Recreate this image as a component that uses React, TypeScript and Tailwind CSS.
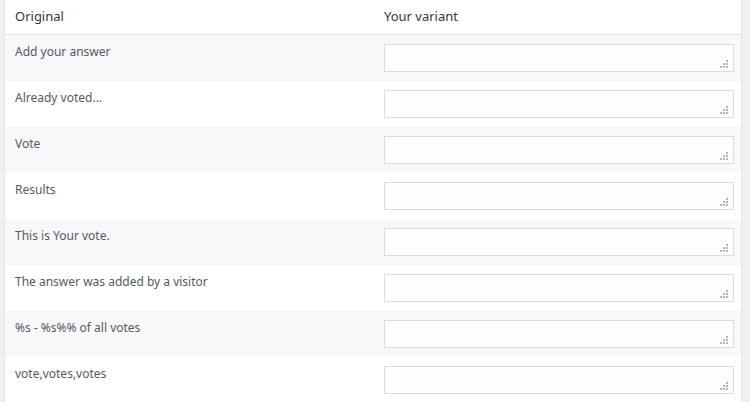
const rows = [
  "Add your answer",
  "Already voted...",
  "Vote",
  "Results",
  "This is Your vote.",
  "The answer was added by a visitor",
  "%s - %s%% of all votes",
  "vote,votes,votes",
];

function ResizeGrip() {
  return (
    <svg
      className="pointer-events-none absolute right-[5px] bottom-[3px]"
      width="9"
      height="9"
      viewBox="0 0 9 9"
      fill="#b4b4b8"
    >
      <rect x="6" y="0" width="2" height="2" />
      <rect x="3" y="3" width="2" height="2" />
      <rect x="6" y="3" width="2" height="2" />
      <rect x="0" y="6" width="2" height="2" />
      <rect x="3" y="6" width="2" height="2" />
      <rect x="6" y="6" width="2" height="2" />
    </svg>
  );
}

export default function App() {
  return (
    <div
      className="min-h-[402px] w-[750px] bg-[#f0f0f1] pl-[4px] pr-[8px]"
      style={{ fontFamily: '"Noto Sans", "Open Sans", sans-serif' }}
    >
      <div className="bg-white border-x border-[#e6e5ea]">
        <div className="grid grid-cols-[370px_1fr] h-[35px] items-center border-b border-[#dedde3] text-[13px] text-[#32373c]">
          <div className="pl-[10px]">Original</div>
          <div className="pl-[9px]">Your variant</div>
        </div>
        {rows.map((label, i) => (
          <div
            key={label}
            className={
              "grid grid-cols-[370px_1fr] h-[46px] " +
              (i % 2 === 0 ? "bg-[#f8f7fa]" : "bg-white")
            }
          >
            <div className="pl-[10px] pt-[8px] text-[12px] leading-[18px] text-[#555a62]">
              {label}
            </div>
            <div className="pl-[9px] pr-[7px] pt-[9px]">
              <div className="relative h-[28px]">
                <textarea
                  className="block h-[28px] w-full resize-none border border-[#dcdce0] bg-[#fefdff] outline-none"
                />
                <ResizeGrip />
              </div>
            </div>
          </div>
        ))}
      </div>
    </div>
  );
}
